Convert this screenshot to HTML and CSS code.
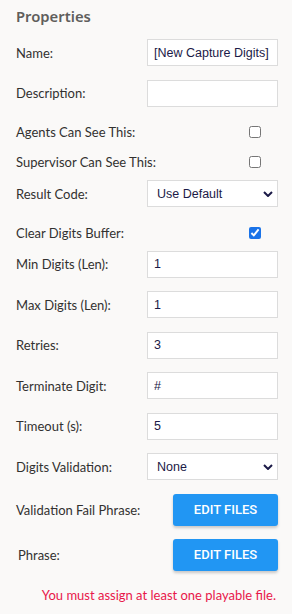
FILE: index.html
```html
<!DOCTYPE html>
<html lang="en">
  <head>
    <meta charset="UTF-8" />
    <meta name="viewport" content="width=device-width, initial-scale=1.0" />
    <title>Properties</title>
    <link rel="stylesheet" href="styles.css">
  </head>
  <body>
    <div class="panel">
      <h2 class="panel-title">Properties</h2>

      <div class="row row-input">
        <label for="name">Name:</label>
        <input id="name" type="text" value="[New Capture Digits]" />
      </div>
      <div class="row row-input">
        <label for="description">Description:</label>
        <input id="description" type="text" value="" />
      </div>
      <div class="row row-check first-check">
        <label for="agents">Agents Can See This:</label>
        <div class="check-cell"><input id="agents" type="checkbox" /></div>
      </div>
      <div class="row row-check">
        <label for="supervisor">Supervisor Can See This:</label>
        <div class="check-cell"><input id="supervisor" type="checkbox" /></div>
      </div>
      <div class="row row-input">
        <label for="result-code">Result Code:</label>
        <div class="select-wrap">
          <select id="result-code">
            <option>Use Default</option>
          </select>
          <svg class="chevron" viewBox="0 0 10 6" width="10" height="6"><path d="M1 1l4 4 4-4" fill="none" stroke="#1b1a47" stroke-width="2"/></svg>
        </div>
      </div>
      <div class="row row-check after-select">
        <label for="clear-buffer">Clear Digits Buffer:</label>
        <div class="check-cell"><input id="clear-buffer" type="checkbox" checked /></div>
      </div>
      <div class="row row-input">
        <label for="min-digits">Min Digits (Len):</label>
        <input id="min-digits" type="text" value="1" />
      </div>
      <div class="row row-input">
        <label for="max-digits">Max Digits (Len):</label>
        <input id="max-digits" type="text" value="1" />
      </div>
      <div class="row row-input">
        <label for="retries">Retries:</label>
        <input id="retries" type="text" value="3" />
      </div>
      <div class="row row-input">
        <label for="terminate">Terminate Digit:</label>
        <input id="terminate" type="text" value="#" />
      </div>
      <div class="row row-input">
        <label for="timeout">Timeout (s):</label>
        <input id="timeout" type="text" value="5" />
      </div>
      <div class="row row-input">
        <label for="validation">Digits Validation:</label>
        <div class="select-wrap">
          <select id="validation">
            <option>None</option>
          </select>
          <svg class="chevron" viewBox="0 0 10 6" width="10" height="6"><path d="M1 1l4 4 4-4" fill="none" stroke="#1b1a47" stroke-width="2"/></svg>
        </div>
      </div>
      <div class="row row-button">
        <label>Validation Fail Phrase:</label>
        <button class="edit-files" type="button">Edit Files</button>
      </div>
      <div class="row row-button">
        <label class="indent">Phrase:</label>
        <button class="edit-files" type="button">Edit Files</button>
      </div>
      <p class="error">You must assign at least one playable file.</p>
    </div>
  </body>
</html>
```

FILE: styles.css
```css
:root {
  --bg-color: #faf9f8;
  --label-color: #323130;
  --title-color: #605e5c;
  --border-color: #dcdcdc;
  --input-text: #1b1a47;
  --primary-color: #2196f3;
  --error-color: #e8174a;
  --label-font: Lato, "Noto Sans", sans-serif;
  --title-font: "Noto Sans", "Open Sans", sans-serif;
  --field-font: "Liberation Sans", Arial, sans-serif;
  --button-font: Roboto, "Liberation Sans", sans-serif;
}

body {
  margin: 0;
  background-color: var(--bg-color);
  font-family: var(--label-font);
}

.panel {
  padding: 4px 14px 0 16px;
}

.panel-title {
  margin: 0 0 11px;
  font-family: var(--title-font);
  font-size: 14.8px;
  line-height: 24px;
  font-weight: 600;
  color: var(--title-color);
}

.row {
  display: grid;
  grid-template-columns: 131px 131px;
  align-items: center;
}

.row label {
  font-size: 13px;
  white-space: nowrap;
  color: var(--label-color);
}

.row-input {
  height: 27px;
  margin-bottom: 13.5px;
}

.row-input input,
.row-input select {
  box-sizing: border-box;
  width: 131px;
  height: 27px;
  margin: 0;
  padding: 0 6px;
  border: 1px solid var(--border-color);
  border-radius: 0;
  background-color: #fff;
  font-family: var(--field-font);
  font-size: 12.5px;
  color: var(--input-text);
  outline: none;
}

.select-wrap {
  position: relative;
}

.row-input select {
  appearance: none;
  padding-left: 9px;
}

.chevron {
  position: absolute;
  right: 5px;
  top: 11px;
  pointer-events: none;
}

.row-check {
  height: 24px;
  margin-bottom: 6px;
}

.first-check {
  margin-top: 0.5px;
}

.after-select {
  margin-top: 1.5px;
}

.check-cell {
  display: flex;
  justify-content: flex-end;
  padding-right: 17px;
}

.check-cell input {
  width: 12px;
  height: 12px;
  margin: 0;
  accent-color: #1a73e8;
}

.row-button {
  height: 32px;
  margin-bottom: 13px;
  grid-template-columns: 157px 105px;
}

.row-button label.indent {
  padding-left: 2px;
}

.edit-files {
  height: 32px;
  border: none;
  border-radius: 3px;
  background-color: var(--primary-color);
  color: #fff;
  font-family: var(--button-font);
  font-size: 13px;
  font-weight: 500;
  text-transform: uppercase;
  box-shadow: 0 2px 3px rgba(0, 0, 0, 0.2);
  cursor: pointer;
}

.error {
  margin: 0;
  padding-top: 3px;
  text-align: right;
  padding-right: 2px;
  font-size: 13px;
  color: var(--error-color);
}
```
